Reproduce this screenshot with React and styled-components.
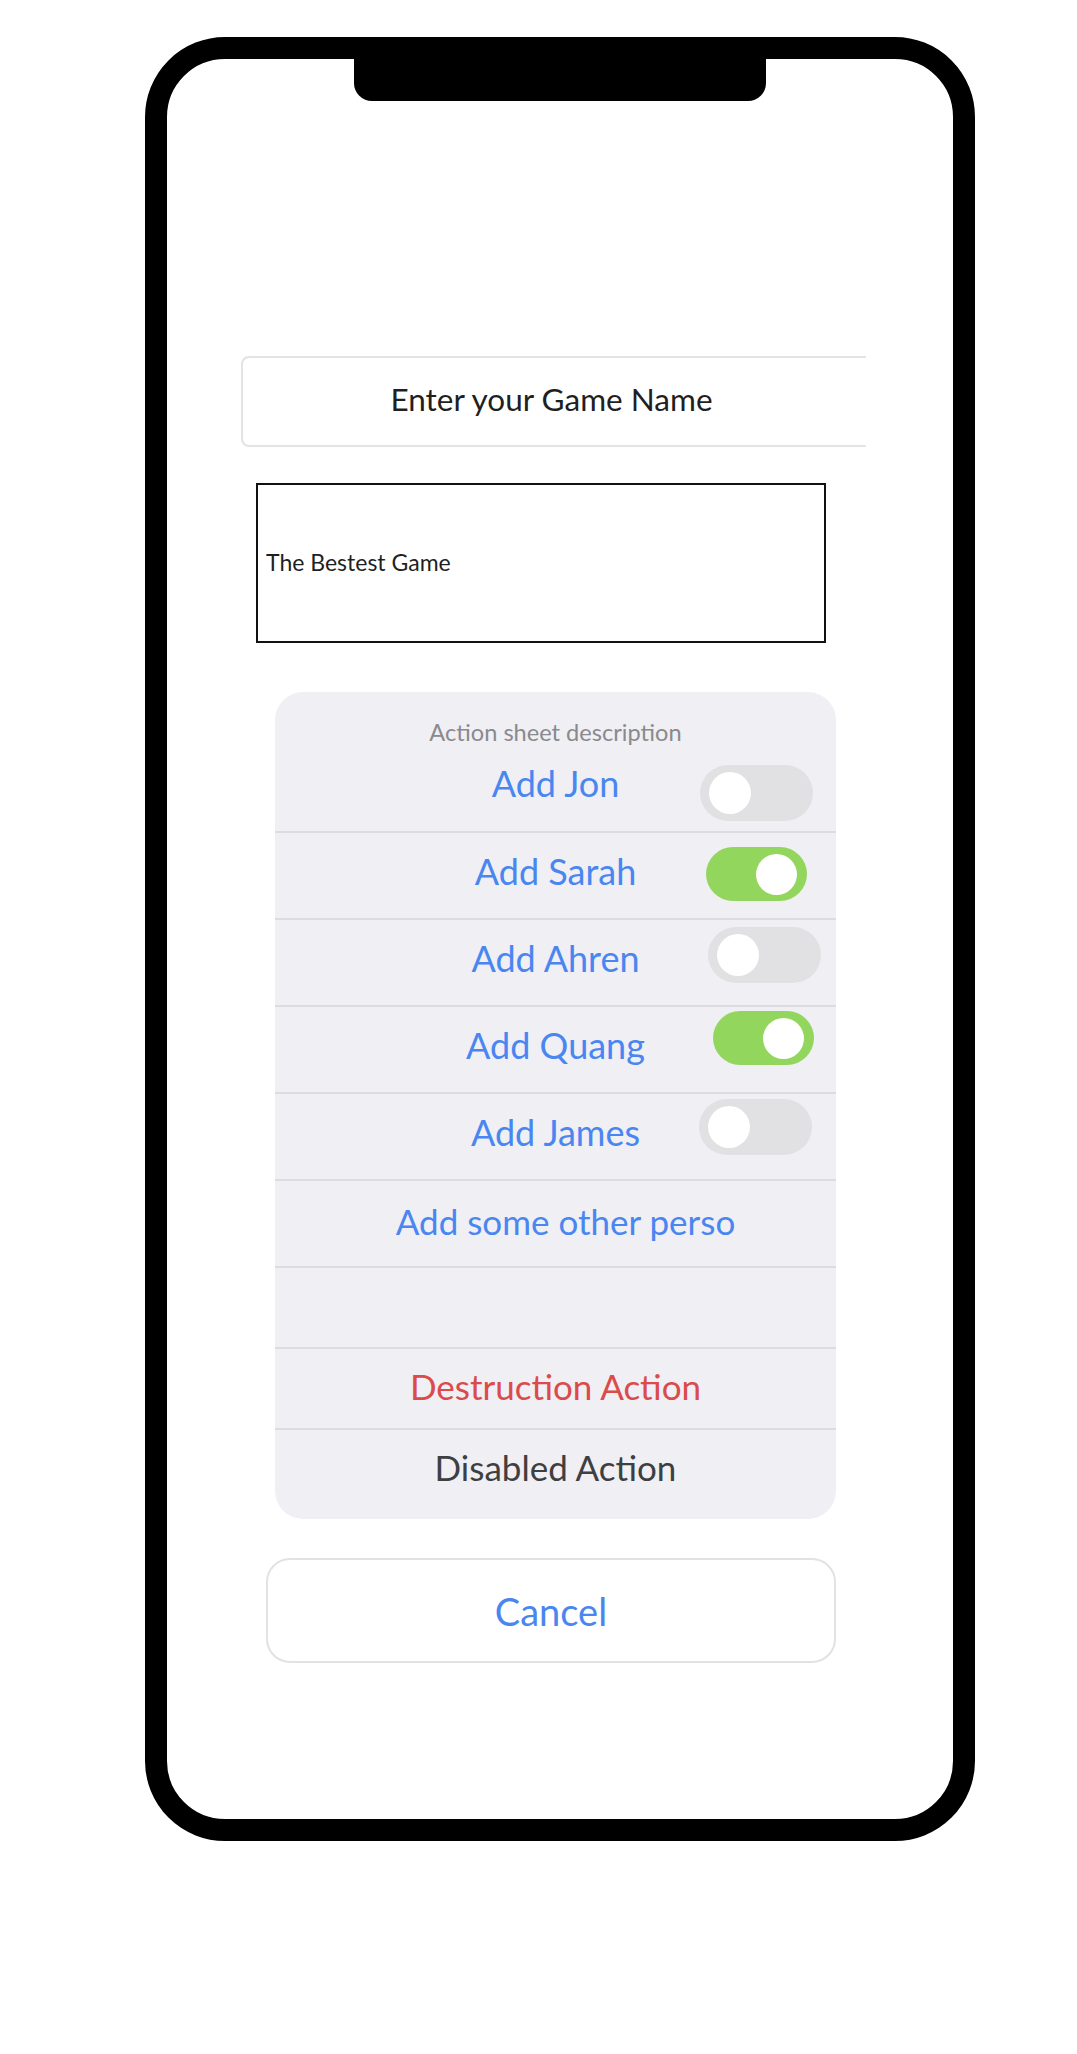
import React, { useState } from 'react';
import styled, { createGlobalStyle } from 'styled-components';

const GlobalStyle = createGlobalStyle`
  html, body {
    margin: 0;
    padding: 0;
    background: #ffffff;
  }
  body {
    font-family: Lato, "Noto Sans", sans-serif;
  }
`;

const BLUE = '#4a86f0';

const Page = styled.div`
  padding: 37px 0 0 145px;
  min-height: 2054px;
  box-sizing: border-box;
`;

const PhoneFrame = styled.div`
  width: 830px;
  height: 1804px;
  box-sizing: border-box;
  border: 22px solid #000;
  border-radius: 80px;
  background: #fff;
  overflow: hidden;
  display: flex;
  flex-direction: column;
  align-items: flex-start;
`;

const Notch = styled.div`
  align-self: center;
  flex-shrink: 0;
  width: 412px;
  height: 42px;
  background: #000;
  border-radius: 0 0 18px 18px;
`;

const GameNameInput = styled.input`
  margin: 255px 0 0 74px;
  width: 625px;
  height: 91px;
  box-sizing: border-box;
  padding: 0 6px 5px 0;
  border: 2px solid #e3e3e3;
  border-right: none;
  border-radius: 8px 0 0 8px;
  outline: none;
  background: #fff;
  font-family: inherit;
  font-size: 31.5px;
  text-align: center;
  color: #1f1f1f;

  &::placeholder {
    color: #1f1f1f;
    opacity: 1;
  }
`;

const NameBox = styled.div`
  margin: 36px 0 0 89px;
  width: 570px;
  height: 160px;
  box-sizing: border-box;
  border: 2px solid #111;
  padding: 0 8px 2px;
  display: flex;
  align-items: center;
  font-size: 23px;
  color: #1f1f1f;
`;

const Sheet = styled.div`
  margin: 49px 0 0 108px;
  width: 561px;
  box-sizing: border-box;
  padding-bottom: 10px;
  background: #efeff4;
  border-radius: 28px;
  overflow: hidden;
`;

const Description = styled.div`
  padding-top: 28px;
  font-size: 23.6px;
  line-height: 24px;
  text-align: center;
  color: #8a8a8e;
`;

const ToggleRow = styled.div`
  display: grid;
  grid-template-columns: 1fr auto 1fr;
  align-items: center;
  height: 87px;
  box-sizing: border-box;
  padding-bottom: 9px;
  border-top: ${p => (p.$first ? 'none' : '2px solid #dcdce0')};
`;

const RowLabel = styled.span`
  grid-column: 2;
  font-size: 36px;
  color: ${BLUE};
  white-space: nowrap;
`;

const Switch = styled.button`
  grid-column: 3;
  justify-self: end;
  align-self: start;
  margin-top: ${p => p.$top}px;
  margin-right: ${p => p.$right}px;
  width: ${p => (p.$on ? 101 : 113)}px;
  height: ${p => (p.$on ? 54 : 56)}px;
  box-sizing: border-box;
  padding: 0 ${p => (p.$on ? 10 : 9)}px;
  border: none;
  border-radius: 999px;
  background: ${p => (p.$on ? '#93d65e' : '#e1e1e3')};
  display: flex;
  align-items: center;
  justify-content: ${p => (p.$on ? 'flex-end' : 'flex-start')};
  cursor: pointer;
`;

const Knob = styled.span`
  width: ${p => (p.$on ? 41 : 42)}px;
  height: ${p => (p.$on ? 41 : 42)}px;
  border-radius: 50%;
  background: #fff;
`;

const ActionRow = styled.div`
  height: ${p => p.$height}px;
  box-sizing: border-box;
  border-top: 2px solid #dcdce0;
  display: flex;
  align-items: center;
  justify-content: center;
  padding: 0 0 5px ${p => p.$shift || 0}px;
  font-size: 35px;
  white-space: nowrap;
  color: ${p => (p.$tone === 'danger' ? '#db4b4b' : p.$tone === 'disabled' ? '#3f3f42' : BLUE)};
`;

const CancelButton = styled.button`
  margin: 39px 0 0 99px;
  width: 570px;
  height: 105px;
  box-sizing: border-box;
  border: 2px solid #e2e2e2;
  border-radius: 24px;
  background: #fff;
  font-family: inherit;
  font-size: 38px;
  color: ${BLUE};
  cursor: pointer;
`;

const people = [
  { name: 'Jon', on: false, top: 21, right: 23 },
  { name: 'Sarah', on: true, top: 14, right: 29 },
  { name: 'Ahren', on: false, top: 7, right: 15 },
  { name: 'Quang', on: true, top: 4, right: 22 },
  { name: 'James', on: false, top: 5, right: 24 },
];

const App = () => {
  const [picked, setPicked] = useState(people.map(p => p.on));

  const flip = (i) => {
    setPicked(prev => prev.map((v, j) => (j === i ? !v : v)));
  };

  return (
    <Page>
      <GlobalStyle />
      <PhoneFrame>
        <Notch />
        <GameNameInput placeholder="Enter your Game Name" />
        <NameBox>The Bestest Game</NameBox>

        <Sheet>
          <Description>Action sheet description</Description>
          {people.map((p, i) => (
            <ToggleRow key={p.name} $first={i === 0}>
              <RowLabel>Add {p.name}</RowLabel>
              <Switch $on={picked[i]} $top={p.top} $right={p.right} onClick={() => flip(i)}>
                <Knob $on={picked[i]} />
              </Switch>
            </ToggleRow>
          ))}
          <ActionRow $height={87} $shift={20}>Add some other perso</ActionRow>
          <ActionRow $height={81} />
          <ActionRow $height={81} $tone="danger">Destruction Action</ActionRow>
          <ActionRow $height={81} $tone="disabled">Disabled Action</ActionRow>
        </Sheet>

        <CancelButton>Cancel</CancelButton>
      </PhoneFrame>
    </Page>
  );
};

export default App;
